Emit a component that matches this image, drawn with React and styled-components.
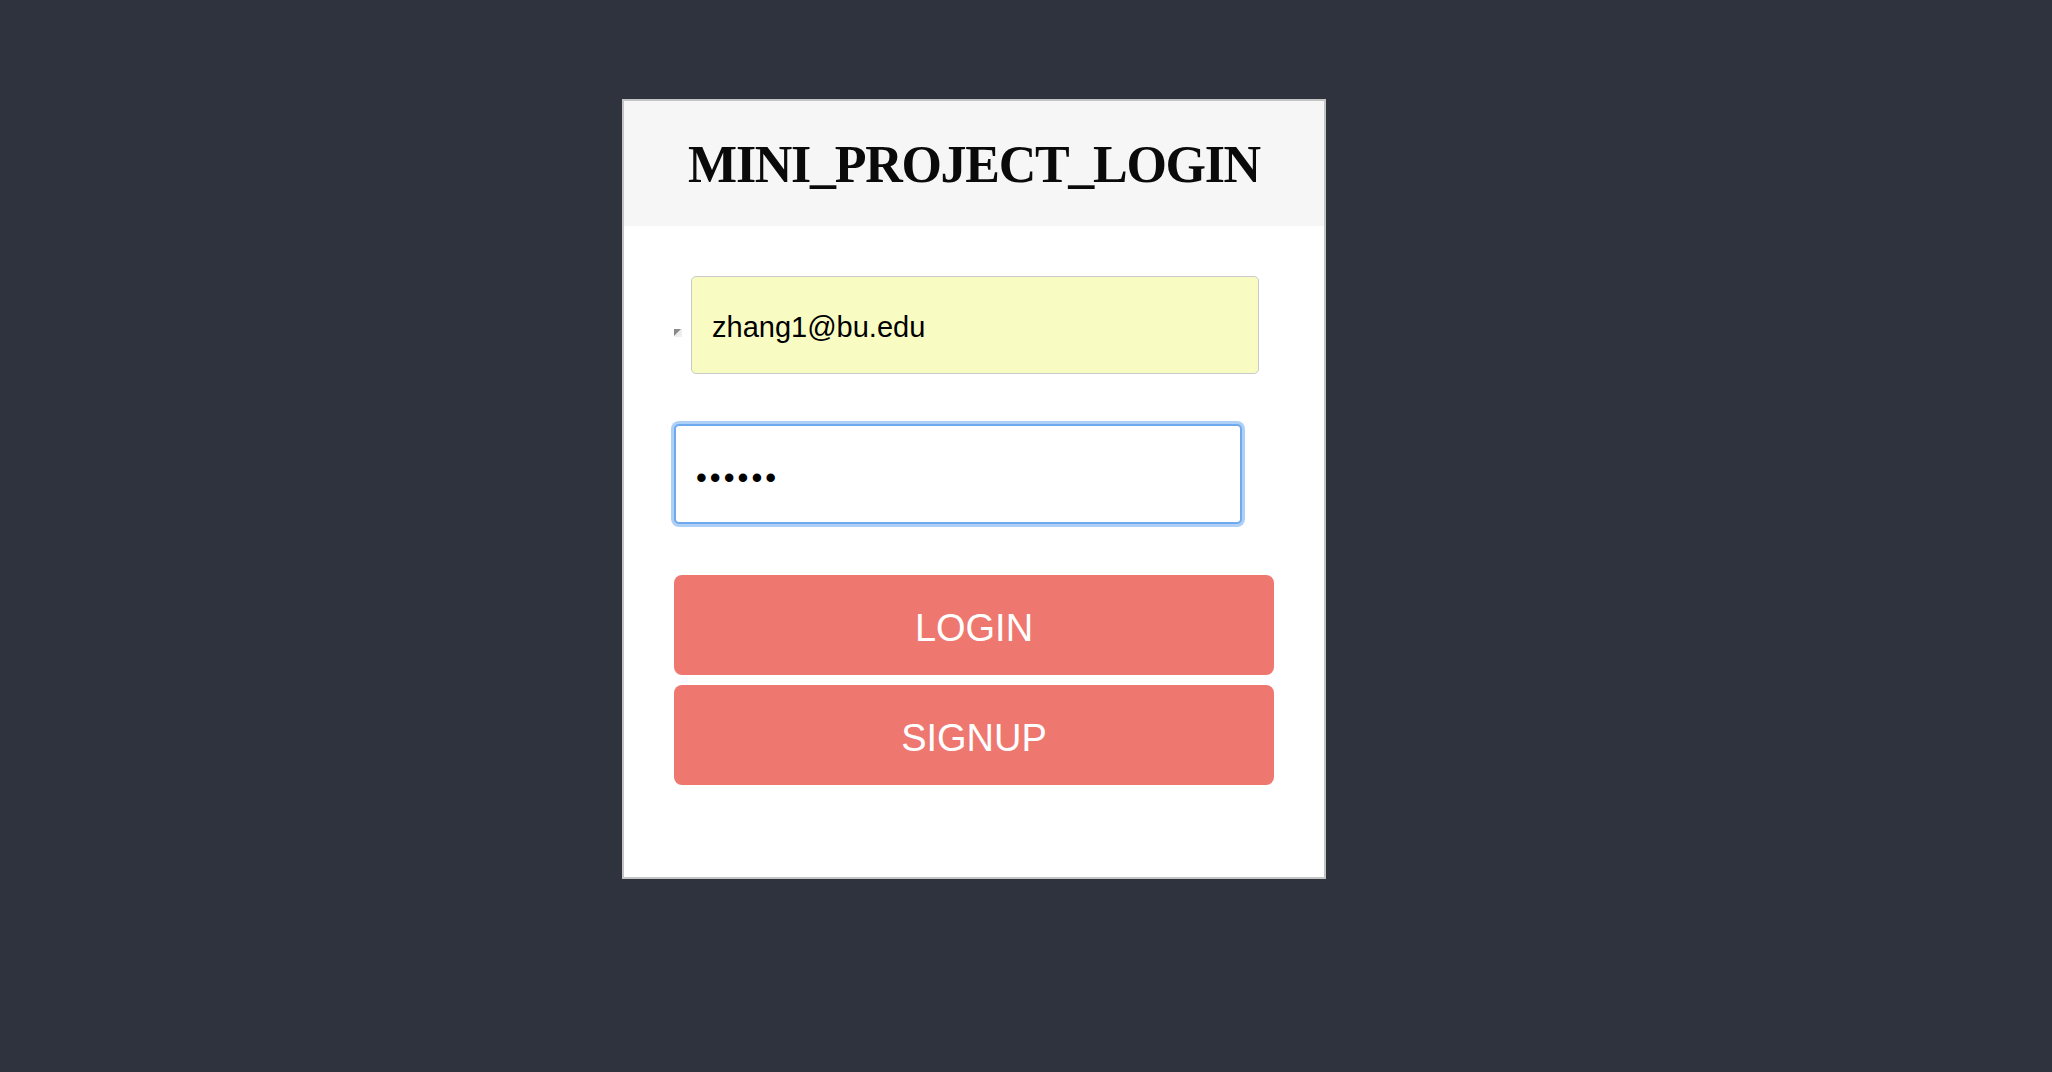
import React from "react";
import styled, { createGlobalStyle } from "styled-components";

const GlobalStyle = createGlobalStyle`
  html, body {
    margin: 0;
    padding: 0;
    background-color: #2e333d;
  }
  #root {
    min-height: 100vh;
  }
`;

const Page = styled.div`
  min-height: 100vh;
  display: flex;
  justify-content: flex-start;
  align-items: flex-start;
  padding: 99px 0 0 622px;
  box-sizing: border-box;
`;

const Card = styled.div`
  width: 704px;
  height: 780px;
  box-sizing: border-box;
  background-color: #ffffff;
  border: 2px solid #c4c4c4;
  display: flex;
  flex-direction: column;
`;

const Header = styled.div`
  height: 125px;
  background-color: #f6f6f6;
  display: flex;
  align-items: center;
  justify-content: center;
`;

const Title = styled.h1`
  margin: 0;
  font-family: "Liberation Serif", "Times New Roman", serif;
  font-weight: bold;
  font-size: 52px;
  letter-spacing: -1.3px;
  line-height: 1;
  color: #0a0a0a;
  padding-top: 2px;
`;

const Form = styled.form`
  display: flex;
  flex-direction: column;
  padding: 50px 50px 0 50px;
`;

const FieldRow = styled.div`
  display: flex;
  align-items: flex-start;
  gap: 9px;
  margin-bottom: ${(p) => p.$space}px;
`;

const BrokenIcon = styled.svg`
  width: 8px;
  height: 8px;
  margin-top: 53px;
  flex-shrink: 0;
`;

const Input = styled.input`
  width: 568px;
  height: ${(p) => (p.$focused ? 100 : 98)}px;
  box-sizing: border-box;
  padding: ${(p) => (p.$focused ? "8px 20px 0" : "4px 20px 0")};
  font-family: "Liberation Sans", Arial, sans-serif;
  font-size: ${(p) => (p.$focused ? 31 : 29)}px;
  color: #000;
  border-radius: 5px;
  border: ${(p) => (p.$focused ? "2px solid #6fa9ee" : "1px solid #c9c9c9")};
  background-color: ${(p) => (p.$autofill ? "#f9fcc2" : "#ffffff")};
  box-shadow: ${(p) => (p.$focused ? "0 0 0 3px #aed0f7" : "none")};
  outline: none;
  letter-spacing: ${(p) => (p.$focused ? "3px" : "0")};
`;

const Button = styled.button`
  width: 600px;
  height: 100px;
  border: none;
  border-radius: 8px;
  background-color: #ee776f;
  color: #ffffff;
  font-family: "Liberation Sans", Arial, sans-serif;
  font-size: 38px;
  cursor: pointer;
  margin-bottom: 10px;
  padding: 6px 0 0;
`;

export default function App() {
  return (
    <>
      <GlobalStyle />
      <Page>
        <Card>
          <Header>
            <Title>MINI_PROJECT_LOGIN</Title>
          </Header>
          <Form onSubmit={(e) => e.preventDefault()}>
            <FieldRow $space={50}>
              <BrokenIcon viewBox="0 0 8 8">
                <rect x="0" y="0" width="8" height="8" fill="#eeeeee" />
                <polygon points="0,0 7,0 0,7" fill="#8a8a8a" />
              </BrokenIcon>
              <Input type="text" defaultValue="zhang1@bu.edu" $autofill />
            </FieldRow>
            <FieldRow $space={51}>
              <Input type="password" defaultValue="123456" $focused />
            </FieldRow>
            <Button type="button">LOGIN</Button>
            <Button type="button">SIGNUP</Button>
          </Form>
        </Card>
      </Page>
    </>
  );
}
